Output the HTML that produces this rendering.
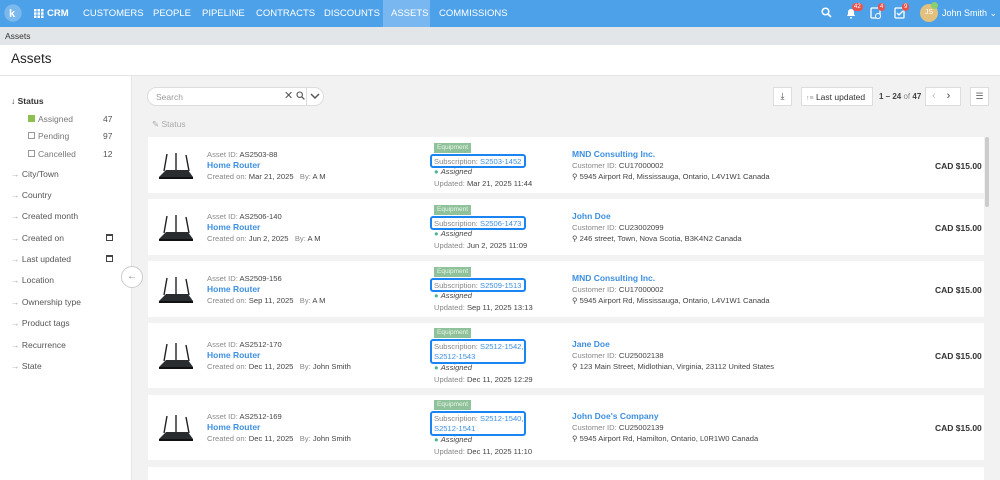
<!DOCTYPE html>
<html><head><meta charset="utf-8"><style>
*{margin:0;padding:0;box-sizing:border-box}
html,body{width:1000px;height:480px;overflow:hidden}
body{font-family:"Liberation Sans",sans-serif;background:#f2f2f2;position:relative;color:#333}
.a{position:absolute;white-space:nowrap}
.nav{position:absolute;left:0;top:0;width:1000px;height:27px;background:#4da1e9}
.nav .i{position:absolute;top:8px;color:#fff;font-size:9.5px;white-space:nowrap}
.card{position:absolute;left:148px;width:836px;background:#fff}
.card .a{font-size:7.6px;color:#888}
.card b{font-weight:normal;color:#444}
.lk{color:#3d8fe0!important}
.nm{font-size:8.5px!important;color:#3d8fe0!important;font-weight:bold}
.badge{background:#8fc29a;color:#e8f5ea!important;font-size:6.5px!important;padding:1px 3px;height:10px}
.box{border:2px solid #1a84f2;border-radius:3px}
.price{font-size:8.5px!important;color:#333!important;font-weight:bold}
.side{font-size:8.5px;color:#555}
</style></head><body>
<div class="nav">
<svg class="a" style="left:4px;top:4px" width="18" height="18"><circle cx="9" cy="9" r="8" fill="#fff" opacity=".25" stroke="#fff" stroke-width="1.3"/><text x="5" y="13" font-size="11" font-weight="bold" fill="#fff" font-family="Liberation Sans">k</text></svg>
<svg class="a" style="left:34px;top:9px" width="10" height="9"><g fill="#fff"><rect x="0" y="0" width="2.5" height="2.5"/><rect x="3.5" y="0" width="2.5" height="2.5"/><rect x="7" y="0" width="2.5" height="2.5"/><rect x="0" y="3.3" width="2.5" height="2.5"/><rect x="3.5" y="3.3" width="2.5" height="2.5"/><rect x="7" y="3.3" width="2.5" height="2.5"/><rect x="0" y="6.5" width="2.5" height="2.5"/><rect x="3.5" y="6.5" width="2.5" height="2.5"/><rect x="7" y="6.5" width="2.5" height="2.5"/></g></svg>
<span class="i" style="left:47px;font-weight:bold">CRM</span>
<span class="i" style="left:83px">CUSTOMERS</span>
<span class="i" style="left:153px">PEOPLE</span>
<span class="i" style="left:202px">PIPELINE</span>
<span class="i" style="left:256px">CONTRACTS</span>
<span class="i" style="left:324px">DISCOUNTS</span>
<div class="a" style="left:383px;top:0;width:47px;height:27px;background:#78b7ef"></div>
<span class="i" style="left:391px">ASSETS</span>
<span class="i" style="left:439px">COMMISSIONS</span>
<svg class="a" style="left:821px;top:7px" width="11" height="11"><circle cx="4.5" cy="4.5" r="3.3" fill="none" stroke="#fff" stroke-width="1.5"/><path d="M7 7l3 3" stroke="#fff" stroke-width="1.7"/></svg>
<svg class="a" style="left:845px;top:7px" width="12" height="12"><path d="M2 9h8l-1-2V5a3 3 0 0 0-6 0v2z M5 10h2v1.5H5z" fill="#fff"/></svg>
<div class="a" style="left:852px;top:3px;background:#e9534f;color:#fff;font-size:6px;border-radius:4px;padding:0 2px;line-height:8px">42</div>
<svg class="a" style="left:870px;top:6px" width="12" height="13"><rect x="1" y="2" width="9" height="10" rx="1" fill="none" stroke="#fff" stroke-width="1.3"/><circle cx="8" cy="10" r="2.5" fill="#4da1e9" stroke="#fff"/></svg>
<div class="a" style="left:878px;top:3px;background:#e9534f;color:#fff;font-size:6px;border-radius:4px;padding:0 2px;line-height:8px">4</div>
<svg class="a" style="left:894px;top:6px" width="12" height="13"><rect x="1" y="2" width="9" height="10" rx="1" fill="none" stroke="#fff" stroke-width="1.3"/><path d="M3 7l2 2 4-4" stroke="#fff" fill="none" stroke-width="1.3"/></svg>
<div class="a" style="left:902px;top:3px;background:#e9534f;color:#fff;font-size:6px;border-radius:4px;padding:0 2px;line-height:8px">9</div>
<div class="a" style="left:920px;top:4px;width:18px;height:18px;border-radius:9px;background:#e2c07e;color:#fff;font-size:7px;text-align:center;line-height:18px">JS</div>
<div class="a" style="left:931px;top:2px;width:7px;height:7px;border-radius:4px;background:#8bd06c"></div>
<span class="i" style="left:942px;font-size:9px">John Smith ⌄</span>
</div>
<div class="a" style="left:0;top:27px;width:1000px;height:18px;background:#e3e6e9"></div>
<span class="a" style="left:5px;top:31px;font-size:8.5px;color:#333">Assets</span>
<div class="a" style="left:0;top:45px;width:1000px;height:31px;background:#fff;border-bottom:1px solid #e4e4e4"></div>
<span class="a" style="left:11px;top:51px;font-size:13.5px;color:#222">Assets</span>
<div class="a" style="left:0;top:76px;width:132px;height:404px;background:#fff;border-right:1px solid #e6e6e6"></div>
<span class="a side" style="left:11px;top:96px;color:#333;font-weight:bold">↓ Status</span>
<div class="a" style="left:28px;top:115px;width:7px;height:7px;background:#8cc152"></div>
<span class="a side" style="left:38px;top:114px;color:#777">Assigned</span><span class="a side" style="left:103px;top:114px">47</span>
<div class="a" style="left:28px;top:132px;width:7px;height:7px;border:1px solid #999"></div>
<span class="a side" style="left:38px;top:131px;color:#777">Pending</span><span class="a side" style="left:103px;top:131px">97</span>
<div class="a" style="left:28px;top:150px;width:7px;height:7px;border:1px solid #999"></div>
<span class="a side" style="left:38px;top:149px;color:#777">Cancelled</span><span class="a side" style="left:103px;top:149px">12</span>
<span class="a side" style="left:11px;top:169px"><span style="color:#aaa">→</span> City/Town</span>
<span class="a side" style="left:11px;top:190px"><span style="color:#aaa">→</span> Country</span>
<span class="a side" style="left:11px;top:211px"><span style="color:#aaa">→</span> Created month</span>
<span class="a side" style="left:11px;top:233px"><span style="color:#aaa">→</span> Created on</span>
<span class="a side" style="left:11px;top:254px"><span style="color:#aaa">→</span> Last updated</span>
<div class="a" style="left:106px;top:234px;width:7px;height:7px;border:1.5px solid #444;border-top-width:2.5px"></div>
<div class="a" style="left:106px;top:255px;width:7px;height:7px;border:1.5px solid #444;border-top-width:2.5px"></div>
<span class="a side" style="left:11px;top:275px"><span style="color:#aaa">→</span> Location</span>
<span class="a side" style="left:11px;top:297px"><span style="color:#aaa">→</span> Ownership type</span>
<span class="a side" style="left:11px;top:318px"><span style="color:#aaa">→</span> Product tags</span>
<span class="a side" style="left:11px;top:340px"><span style="color:#aaa">→</span> Recurrence</span>
<span class="a side" style="left:11px;top:361px"><span style="color:#aaa">→</span> State</span>
<div class="a" style="left:121px;top:266px;width:22px;height:22px;border-radius:11px;background:#fff;border:1px solid #ccc;color:#888;font-size:10px;text-align:center;line-height:20px">←</div>
<div class="a" style="left:147px;top:87px;width:177px;height:19px;border-radius:10px;background:#fff;border:1px solid #ddd"></div>
<span class="a" style="left:156px;top:92px;font-size:8.5px;color:#999">Search</span>
<span class="a" style="left:284px;top:89px;font-size:11px;color:#555">✕</span>
<svg class="a" style="left:296px;top:91px" width="9" height="9"><circle cx="3.7" cy="3.7" r="2.7" fill="none" stroke="#555" stroke-width="1.1"/><path d="M5.8 5.8l2.6 2.6" stroke="#555" stroke-width="1.2"/></svg>
<div class="a" style="left:306px;top:88px;width:1px;height:17px;background:#ddd"></div>
<svg class="a" style="left:310px;top:93px" width="10" height="7"><path d="M1 1l4 4 4-4" stroke="#555" fill="none" stroke-width="1.5"/></svg>
<span class="a" style="left:152px;top:119px;font-size:8.5px;color:#aaa">✎ Status</span>
<div class="a" style="left:773px;top:87px;width:19px;height:19px;background:#fff;border:1px solid #ddd;color:#444;font-size:9px;text-align:center;line-height:17px">⤓</div>
<div class="a" style="left:801px;top:87px;width:72px;height:19px;background:#fff;border:1px solid #ddd"></div>
<span class="a" style="left:806px;top:92px;font-size:8.5px;color:#333"><span style="color:#999;font-size:7px">↑≡</span> Last updated</span>
<span class="a" style="left:879px;top:92px;font-size:8px;color:#444"><b>1 – 24</b> <span style="color:#888">of</span> <b>47</b></span>
<div class="a" style="left:925px;top:87px;width:36px;height:19px;background:#fff;border:1px solid #ddd;font-size:11px;line-height:16px"><span style="color:#bbb;margin-left:6px">‹</span><span style="color:#444;margin-left:11px">›</span></div>
<div class="a" style="left:970px;top:87px;width:19px;height:19px;background:#fff;border:1px solid #ddd;color:#666;font-size:9px;text-align:center;line-height:17px">☰</div>
<div class="a" style="left:985px;top:137px;width:4px;height:70px;background:#ccc;border-radius:2px"></div>

<svg width="0" height="0" style="position:absolute"><defs><g id="r"><path d="M6 20l3-17M18 20l0-18M31 20l-3-16" stroke="#222" stroke-width="1.4"/><path d="M1 26l7-7h22l5 7z" fill="#2a2d30"/><path d="M1 26h34v2H1z" fill="#111"/></g></defs></svg>

<div class="card" style="top:137px;height:56px">
<svg class="a" style="left:10px;top:14px" width="38" height="30"><use href="#r"/></svg>
<span class="a" style="left:59px;top:13px">Asset ID: <b>AS2503-88</b></span>
<span class="a nm" style="left:59px;top:23px">Home Router</span>
<span class="a" style="left:59px;top:35px">Created on: <b>Mar 21, 2025</b> &nbsp; By: <b>A M</b></span>
<span class="a badge" style="left:286px;top:6px">Equipment</span>
<div class="a box" style="left:282px;top:17px;width:96px;height:14px"></div>
<span class="a" style="left:286px;top:19.5px">Subscription: <span class="lk">S2503-1452</span></span>
<span class="a" style="left:286px;top:30px"><span style="color:#4bb58a">●</span> <i style="color:#444">Assigned</i></span>
<span class="a" style="left:286px;top:42px">Updated: <b>Mar 21, 2025 11:44</b></span>
<span class="a nm" style="left:424px;top:12px">MND Consulting Inc.</span>
<span class="a" style="left:424px;top:24px">Customer ID: <b>CU17000002</b></span>
<span class="a" style="left:424px;top:35px"><b>⚲ 5945 Airport Rd, Mississauga, Ontario, L4V1W1 Canada</b></span>
<span class="a price" style="left:787px;top:24px">CAD $15.00</span>
</div>
<div class="card" style="top:199px;height:56px">
<svg class="a" style="left:10px;top:14px" width="38" height="30"><use href="#r"/></svg>
<span class="a" style="left:59px;top:13px">Asset ID: <b>AS2506-140</b></span>
<span class="a nm" style="left:59px;top:23px">Home Router</span>
<span class="a" style="left:59px;top:35px">Created on: <b>Jun 2, 2025</b> &nbsp; By: <b>A M</b></span>
<span class="a badge" style="left:286px;top:6px">Equipment</span>
<div class="a box" style="left:282px;top:17px;width:96px;height:14px"></div>
<span class="a" style="left:286px;top:19.5px">Subscription: <span class="lk">S2506-1473</span></span>
<span class="a" style="left:286px;top:30px"><span style="color:#4bb58a">●</span> <i style="color:#444">Assigned</i></span>
<span class="a" style="left:286px;top:42px">Updated: <b>Jun 2, 2025 11:09</b></span>
<span class="a nm" style="left:424px;top:12px">John Doe</span>
<span class="a" style="left:424px;top:24px">Customer ID: <b>CU23002099</b></span>
<span class="a" style="left:424px;top:35px"><b>⚲ 246 street, Town, Nova Scotia, B3K4N2 Canada</b></span>
<span class="a price" style="left:787px;top:24px">CAD $15.00</span>
</div>
<div class="card" style="top:261px;height:56px">
<svg class="a" style="left:10px;top:14px" width="38" height="30"><use href="#r"/></svg>
<span class="a" style="left:59px;top:13px">Asset ID: <b>AS2509-156</b></span>
<span class="a nm" style="left:59px;top:23px">Home Router</span>
<span class="a" style="left:59px;top:35px">Created on: <b>Sep 11, 2025</b> &nbsp; By: <b>A M</b></span>
<span class="a badge" style="left:286px;top:6px">Equipment</span>
<div class="a box" style="left:282px;top:17px;width:96px;height:14px"></div>
<span class="a" style="left:286px;top:19.5px">Subscription: <span class="lk">S2509-1513</span></span>
<span class="a" style="left:286px;top:30px"><span style="color:#4bb58a">●</span> <i style="color:#444">Assigned</i></span>
<span class="a" style="left:286px;top:42px">Updated: <b>Sep 11, 2025 13:13</b></span>
<span class="a nm" style="left:424px;top:12px">MND Consulting Inc.</span>
<span class="a" style="left:424px;top:24px">Customer ID: <b>CU17000002</b></span>
<span class="a" style="left:424px;top:35px"><b>⚲ 5945 Airport Rd, Mississauga, Ontario, L4V1W1 Canada</b></span>
<span class="a price" style="left:787px;top:24px">CAD $15.00</span>
</div>
<div class="card" style="top:323px;height:65px">
<svg class="a" style="left:10px;top:18px" width="38" height="30"><use href="#r"/></svg>
<span class="a" style="left:59px;top:17px">Asset ID: <b>AS2512-170</b></span>
<span class="a nm" style="left:59px;top:27px">Home Router</span>
<span class="a" style="left:59px;top:39px">Created on: <b>Dec 11, 2025</b> &nbsp; By: <b>John Smith</b></span>
<span class="a badge" style="left:286px;top:5px">Equipment</span>
<div class="a box" style="left:282px;top:16px;width:96px;height:25px"></div>
<span class="a" style="left:286px;top:18.5px">Subscription: <span class="lk">S2512-1542,</span></span>
<span class="a lk" style="left:286px;top:29px">S2512-1543</span>
<span class="a" style="left:286px;top:40px"><span style="color:#4bb58a">●</span> <i style="color:#444">Assigned</i></span>
<span class="a" style="left:286px;top:52px">Updated: <b>Dec 11, 2025 12:29</b></span>
<span class="a nm" style="left:424px;top:16px">Jane Doe</span>
<span class="a" style="left:424px;top:28px">Customer ID: <b>CU25002138</b></span>
<span class="a" style="left:424px;top:39px"><b>⚲ 123 Main Street, Midlothian, Virginia, 23112 United States</b></span>
<span class="a price" style="left:787px;top:28px">CAD $15.00</span>
</div>
<div class="card" style="top:395px;height:65px">
<svg class="a" style="left:10px;top:18px" width="38" height="30"><use href="#r"/></svg>
<span class="a" style="left:59px;top:17px">Asset ID: <b>AS2512-169</b></span>
<span class="a nm" style="left:59px;top:27px">Home Router</span>
<span class="a" style="left:59px;top:39px">Created on: <b>Dec 11, 2025</b> &nbsp; By: <b>John Smith</b></span>
<span class="a badge" style="left:286px;top:5px">Equipment</span>
<div class="a box" style="left:282px;top:16px;width:96px;height:25px"></div>
<span class="a" style="left:286px;top:18.5px">Subscription: <span class="lk">S2512-1540,</span></span>
<span class="a lk" style="left:286px;top:29px">S2512-1541</span>
<span class="a" style="left:286px;top:40px"><span style="color:#4bb58a">●</span> <i style="color:#444">Assigned</i></span>
<span class="a" style="left:286px;top:52px">Updated: <b>Dec 11, 2025 11:10</b></span>
<span class="a nm" style="left:424px;top:16px">John Doe's Company</span>
<span class="a" style="left:424px;top:28px">Customer ID: <b>CU25002139</b></span>
<span class="a" style="left:424px;top:39px"><b>⚲ 5945 Airport Rd, Hamilton, Ontario, L0R1W0 Canada</b></span>
<span class="a price" style="left:787px;top:28px">CAD $15.00</span>
</div>
<div class="card" style="top:467px;height:13px"></div>
</body></html>
